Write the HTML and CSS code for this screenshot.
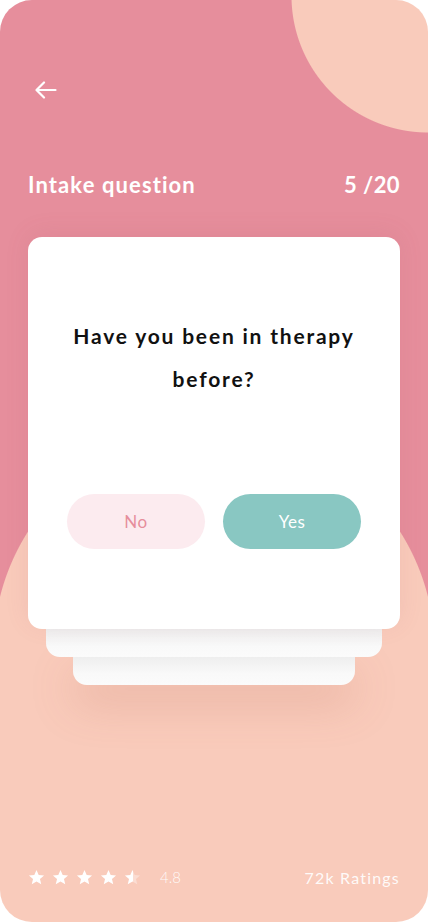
FILE: index.html
```html
<!DOCTYPE html>
<html lang="en">
<head>
<meta charset="utf-8">
<title>Intake question</title>
<link rel="stylesheet" href="styles.css">
</head>
<body>
<div class="phone">
  <div class="top-bar">
    <svg class="back" width="22" height="18" viewBox="0 0 22 18" fill="none" stroke="#fff" stroke-width="2.2" stroke-linecap="round" stroke-linejoin="round">
      <path d="M20.5 9H2"/>
      <path d="M9 1.5L1.5 9L9 16.5"/>
    </svg>
  </div>
  <div class="header">
    <span class="title">Intake question</span>
    <span class="count">5 /20</span>
  </div>
  <div class="stack">
    <div class="card">
      <p class="question">Have you been in therapy<br>before?</p>
      <div class="answers">
        <button class="btn btn-no">No</button>
        <button class="btn btn-yes">Yes</button>
      </div>
    </div>
    <div class="under under-1"></div>
    <div class="under under-2"></div>
  </div>
  <div class="footer">
    <div class="rating">
      <div class="stars">
        <svg width="17" height="17" viewBox="0 0 24 24"><path fill="#fff" d="M12 1.5l3.1 7.1 7.6.6-5.8 5 1.8 7.5L12 17.7 5.3 21.7l1.8-7.5-5.8-5 7.6-.6z"/></svg>
        <svg width="17" height="17" viewBox="0 0 24 24"><path fill="#fff" d="M12 1.5l3.1 7.1 7.6.6-5.8 5 1.8 7.5L12 17.7 5.3 21.7l1.8-7.5-5.8-5 7.6-.6z"/></svg>
        <svg width="17" height="17" viewBox="0 0 24 24"><path fill="#fff" d="M12 1.5l3.1 7.1 7.6.6-5.8 5 1.8 7.5L12 17.7 5.3 21.7l1.8-7.5-5.8-5 7.6-.6z"/></svg>
        <svg width="17" height="17" viewBox="0 0 24 24"><path fill="#fff" d="M12 1.5l3.1 7.1 7.6.6-5.8 5 1.8 7.5L12 17.7 5.3 21.7l1.8-7.5-5.8-5 7.6-.6z"/></svg>
        <svg width="17" height="17" viewBox="0 0 24 24"><defs><linearGradient id="half" x1="0" x2="1" y1="0" y2="0"><stop offset="0.5" stop-color="#fff"/><stop offset="0.5" stop-color="#fff" stop-opacity="0.35"/></linearGradient></defs><path fill="url(#half)" d="M12 1.5l3.1 7.1 7.6.6-5.8 5 1.8 7.5L12 17.7 5.3 21.7l1.8-7.5-5.8-5 7.6-.6z"/></svg>
      </div>
      <span class="score">4.8</span>
    </div>
    <span class="ratings">72k Ratings</span>
  </div>
</div>
</body>
</html>
```

FILE: styles.css
```css
* { box-sizing: border-box; }

html, body {
  margin: 0;
  padding: 0;
  background: #ffffff;
}

.phone {
  width: 428px;
  height: 922px;
  border-radius: 32px;
  overflow: hidden;
  display: flex;
  flex-direction: column;
  padding: 0 28px;
  font-family: "Lato", "Liberation Sans", sans-serif;
  background:
    radial-gradient(circle at 428px -4px, #f9cbbb 136px, rgba(249,203,187,0) 137px),
    radial-gradient(circle at 214px 650px, #f9cbbb 220px, rgba(249,203,187,0) 221px),
    linear-gradient(to bottom, rgba(249,203,187,0) 650px, #f9cbbb 650px),
    #e68e9c;
}

.top-bar {
  height: 18px;
  margin-top: 81px;
  display: flex;
  align-items: center;
}

.back {
  display: block;
  margin-left: 7px;
}

.header {
  margin-top: 72px;
  display: flex;
  justify-content: space-between;
  align-items: center;
  height: 26px;
  color: #ffffff;
  font-weight: 700;
  font-size: 22px;
}

.title {
  letter-spacing: 1.1px;
}

.count {
  letter-spacing: 0.4px;
}

.stack {
  margin-top: 40px;
  display: flex;
  flex-direction: column;
  align-items: stretch;
}

.card {
  position: relative;
  z-index: 3;
  height: 392px;
  background: #ffffff;
  border-radius: 14px;
  padding: 77px 20px 0;
  display: flex;
  flex-direction: column;
  box-shadow: 0 -4px 24px rgba(170, 80, 95, 0.10);
}

.question {
  margin: 0;
  text-align: center;
  font-size: 21px;
  font-weight: 700;
  line-height: 43px;
  color: #111111;
  letter-spacing: 1.8px;
}

.answers {
  margin-top: 94px;
  padding: 0 19px;
  display: flex;
  justify-content: space-between;
}

.btn {
  width: 138px;
  height: 55px;
  border: none;
  border-radius: 28px;
  font-family: "Lato", "Liberation Sans", sans-serif;
  font-size: 17px;
  font-weight: 400;
  letter-spacing: 0.5px;
  padding: 0;
}

.btn-no {
  background: #fcebef;
  color: #e68e9c;
}

.btn-yes {
  background: #89c7c2;
  color: #ffffff;
}

.under {
  height: 28px;
  border-radius: 0 0 14px 14px;
  background: linear-gradient(to bottom, #eeeeee, #f9f9f9 60%, #fbfbfb);
}

.under-1 {
  position: relative;
  z-index: 2;
  margin: 0 18px;
}

.under-2 {
  position: relative;
  z-index: 1;
  margin: 0 45px;
  box-shadow: 0 18px 44px rgba(190, 110, 90, 0.26);
}

.footer {
  margin-top: auto;
  margin-bottom: 35px;
  display: flex;
  justify-content: space-between;
  align-items: center;
  height: 20px;
  color: rgba(255, 255, 255, 0.92);
}

.rating {
  display: flex;
  align-items: center;
}

.stars {
  display: flex;
  gap: 7px;
}

.stars svg {
  display: block;
}

.score {
  margin-left: 19px;
  font-size: 15px;
  font-weight: 300;
}

.ratings {
  font-size: 16px;
  font-weight: 400;
  letter-spacing: 1.2px;
}
```
